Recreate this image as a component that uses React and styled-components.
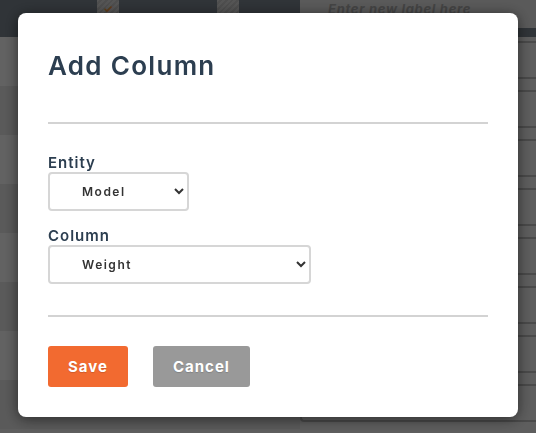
import React, { useState } from 'react';
import styled, { createGlobalStyle } from 'styled-components';

const GlobalStyle = createGlobalStyle`
  html, body {
    margin: 0;
    padding: 0;
    width: 536px;
    height: 433px;
    overflow: hidden;
    font-family: Inter, "Open Sans", sans-serif;
  }
`;

const Page = styled.div`
  width: 536px;
  height: 433px;
  background: #ebebeb;
  display: flex;
  flex-direction: column;
`;

const Header = styled.div`
  display: flex;
  height: 28px;
  background: #78828c;
`;

const HeaderTools = styled.div`
  width: 300px;
  display: flex;
  gap: 98px;
  padding-left: 97px;
  box-sizing: border-box;
`;

const HatchCell = styled.div`
  width: 22px;
  height: 26px;
  background: repeating-linear-gradient(
    135deg,
    #d5d5d5 0,
    #d5d5d5 2px,
    #c4c4c4 2px,
    #c4c4c4 4px
  );
  color: #f39a40;
  font-size: 11px;
  font-weight: 700;
  display: flex;
  justify-content: center;
  padding-top: 2px;
  box-sizing: border-box;
`;

const LabelInput = styled.div`
  flex: 1;
  background: #e1e1e1;
  padding: 1px 0 0 28px;
  font-size: 13px;
  font-weight: 700;
  font-style: italic;
  letter-spacing: 0.7px;
  color: #acacac;
  line-height: 16px;
`;

const HeaderStrip = styled.div`
  height: 9px;
  background: #78828c;
`;

const Rows = styled.div`
  display: flex;
  flex-direction: column;
`;

const Row = styled.div`
  display: flex;
  height: 49px;
  background: ${(p) => (p.$alt ? '#e0e0e0' : '#f5f5f5')};
`;

const RowName = styled.div`
  width: 300px;
`;

const RowField = styled.div`
  flex: 1;
  padding-top: 4px;
  background: #ebebeb;
`;

const FieldBox = styled.div`
  height: 38px;
  border: 2px solid #b8b8b8;
  border-right: none;
  border-radius: 4px 0 0 4px;
  box-sizing: border-box;
`;

const Overlay = styled.div`
  position: fixed;
  inset: 0;
  background: rgba(0, 0, 0, 0.6);
  display: flex;
  justify-content: center;
  align-items: flex-start;
  padding-top: 13px;
`;

const Modal = styled.div`
  width: 500px;
  box-sizing: border-box;
  background: #ffffff;
  border-radius: 8px;
  box-shadow: 0 2px 14px rgba(0, 0, 0, 0.55);
  padding: 37px 30px 30px;
  display: flex;
  flex-direction: column;
`;

const Title = styled.h2`
  margin: 0 0 40px;
  font-size: 26px;
  line-height: 32px;
  font-weight: 600;
  letter-spacing: 1.3px;
  color: #2c3e50;
`;

const Divider = styled.hr`
  margin: 0;
  border: none;
  height: 2px;
  background: #d3d3d3;
`;

const Form = styled.div`
  display: flex;
  flex-direction: column;
  padding: 30px 0 31px;
`;

const Label = styled.label`
  font-size: 15px;
  line-height: 18px;
  font-weight: 600;
  letter-spacing: 1px;
  color: #2c3e50;
  margin-top: ${(p) => (p.$first ? '0' : '16px')};
`;

const Select = styled.select`
  width: ${(p) => p.$width}px;
  height: 39px;
  box-sizing: border-box;
  border: 2px solid #d6d6d6;
  border-radius: 4px;
  background: #ffffff;
  padding: 0 4px 0 28px;
  font-family: Inter, "Open Sans", sans-serif;
  font-size: 12px;
  font-weight: 600;
  letter-spacing: 1.5px;
  color: #333333;
`;

const Actions = styled.div`
  display: flex;
  gap: 25px;
  padding-top: 29px;
`;

const Button = styled.button`
  height: 41px;
  padding: 0 20px;
  border: none;
  border-radius: 3px;
  background: ${(p) => (p.$variant === 'primary' ? '#f26a30' : '#999999')};
  color: #ffffff;
  font-family: Inter, "Open Sans", sans-serif;
  font-size: 15px;
  font-weight: 700;
  letter-spacing: 1px;
  text-shadow: 0 1px 1px rgba(0, 0, 0, 0.15);
  cursor: pointer;
`;

const rows = [0, 1, 2, 3, 4, 5, 6, 7];

const App = () => {
  const [entity, setEntity] = useState('Model');
  const [column, setColumn] = useState('Weight');

  return (
    <>
      <GlobalStyle />
      <Page>
        <Header>
          <HeaderTools>
            <HatchCell>✓</HatchCell>
            <HatchCell />
          </HeaderTools>
          <LabelInput>Enter new label here</LabelInput>
        </Header>
        <HeaderStrip />
        <Rows>
          {rows.map((r) => (
            <Row key={r} $alt={r % 2 === 1}>
              <RowName />
              <RowField>
                <FieldBox />
              </RowField>
            </Row>
          ))}
        </Rows>
      </Page>
      <Overlay>
        <Modal>
          <Title>Add Column</Title>
          <Divider />
          <Form>
            <Label $first>Entity</Label>
            <Select $width={141} value={entity} onChange={(e) => setEntity(e.target.value)}>
              <option>Model</option>
              <option>Make</option>
              <option>Owner</option>
            </Select>
            <Label>Column</Label>
            <Select $width={263} value={column} onChange={(e) => setColumn(e.target.value)}>
              <option>Weight</option>
              <option>Height</option>
              <option>Length</option>
            </Select>
          </Form>
          <Divider />
          <Actions>
            <Button type="button" $variant="primary">Save</Button>
            <Button type="button">Cancel</Button>
          </Actions>
        </Modal>
      </Overlay>
    </>
  );
};

export default App;
